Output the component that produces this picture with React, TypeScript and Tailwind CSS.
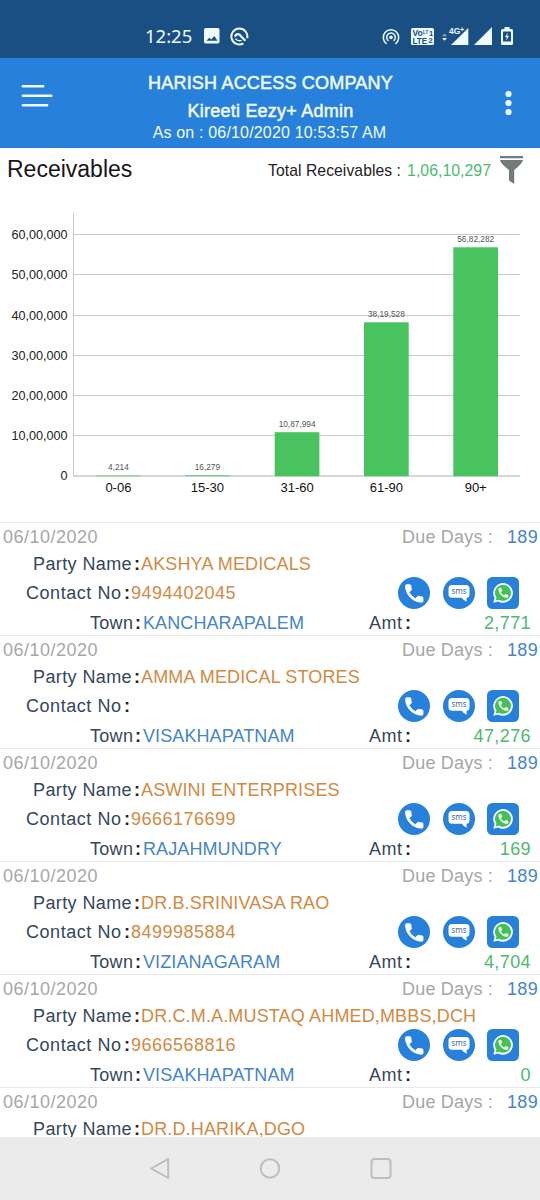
type Party = {
  name: string;
  contact: string;
  town: string;
  amount: string;
};

const parties: Party[] = [
  { name: "AKSHYA MEDICALS", contact: "9494402045", town: "KANCHARAPALEM", amount: "2,771" },
  { name: "AMMA MEDICAL STORES", contact: "", town: "VISAKHAPATNAM", amount: "47,276" },
  { name: "ASWINI ENTERPRISES", contact: "9666176699", town: "RAJAHMUNDRY", amount: "169" },
  { name: "DR.B.SRINIVASA RAO", contact: "8499985884", town: "VIZIANAGARAM", amount: "4,704" },
  { name: "DR.C.M.A.MUSTAQ AHMED,MBBS,DCH", contact: "9666568816", town: "VISAKHAPATNAM", amount: "0" }
];

const gridLines = [
  { y: 34.5, label: "60,00,000" },
  { y: 74.5, label: "50,00,000" },
  { y: 115.5, label: "40,00,000" },
  { y: 155.5, label: "30,00,000" },
  { y: 195.5, label: "20,00,000" },
  { y: 235.5, label: "10,00,000" },
  { y: 276, label: "0" }
];

const bars = [
  { x: 96, top: 275.6, range: "0-06", value: "4,214" },
  { x: 185, top: 275.4, range: "15-30", value: "16,279" },
  { x: 274.7, top: 232.2, range: "31-60", value: "10,87,994" },
  { x: 364, top: 122.3, range: "61-90", value: "38,19,528" },
  { x: 453.3, top: 47.3, range: "90+", value: "56,82,282" }
];

const handset =
  "M6.62 10.79a15.05 15.05 0 0 0 6.59 6.59l2.2-2.2a1 1 0 0 1 1.02-.24c1.12.37 2.33.57 3.57.57.55 0 1 .45 1 1V20c0 .55-.45 1-1 1C10.61 21 3 13.39 3 4c0-.55.45-1 1-1h3.5c.55 0 1 .45 1 1 0 1.25.2 2.45.57 3.57.11.35.03.74-.25 1.02z";

function StatusBar() {
  return (
    <div className="flex h-[58px] items-end bg-[#194f82] pr-[27px] pb-[11px] pl-[145px] text-[#eefaff]">
      <span className="w-[59px] font-['Noto_Sans',sans-serif] text-[18.5px] leading-[23px]">12:25</span>
      <svg className="mb-[3px]" width="16" height="16" viewBox="0 0 16 16">
        <rect width="15.5" height="15.5" rx="1.8" fill="currentColor" />
        <path d="M2.5 12.7 5.2 9.7 7.2 11.5 10.3 8 13.5 12.7Z" fill="#194f82" />
      </svg>
      <svg className="mb-[1px] ml-[10px]" width="19" height="19" viewBox="0 0 19 19" fill="none" stroke="currentColor">
        <path d="M13.4 16.4A8 8 0 1 1 17.2 11.2" strokeWidth="2" />
        <path d="M5 9.6C6.2 6.4 9.5 6.4 11 9.3L15.4 13.8" strokeWidth="2.2" />
        <path d="M5.2 11.6Q7.8 14.6 11.6 13.4" strokeWidth="1.4" />
      </svg>
      <svg className="mb-px ml-auto" width="18" height="18" viewBox="0 0 18 18" fill="none" stroke="currentColor" strokeWidth="1.5">
        <circle cx="9" cy="9.4" r="1.8" fill="currentColor" stroke="none" />
        <path d="M6.4 12.8A4.3 4.3 0 1 1 11.6 12.8M4.6 15.8A7.7 7.7 0 1 1 13.4 15.8" />
      </svg>
      <svg className="mb-[2px] ml-[11px]" width="23" height="17" viewBox="0 0 23 17">
        <rect width="23" height="17" rx="1.5" fill="currentColor" />
        <g fill="#194f82" className="font-['Liberation_Sans',sans-serif] font-bold">
          <text x="1.5" y="7.8" fontSize="8.5">Vo</text>
          <text x="12" y="5.5" fontSize="4.5">LT</text>
          <text x="18" y="7.6" fontSize="7.5">1</text>
          <text x="1.5" y="15.6" fontSize="8.5" textLength="14.5" lengthAdjust="spacingAndGlyphs">LTE</text>
          <text x="17.5" y="15.4" fontSize="7.5">2</text>
        </g>
      </svg>
      <svg className="mb-px ml-[8px]" width="27" height="20" viewBox="0 0 27 20" fill="currentColor">
        <path d="M0 10.2 2.5 7.5 5 10.2Z" opacity=".55" />
        <path d="M0 12 2.5 14.7 5 12Z" />
        <path d="M26.3 2V19H9Z" />
        <g stroke="#194f82" strokeWidth="1.2" paintOrder="stroke" className="font-['Liberation_Sans',sans-serif] font-bold">
          <text x="7" y="8" fontSize="8.5">4G</text>
          <text x="18" y="6" fontSize="7">+</text>
        </g>
      </svg>
      <svg className="mb-[2px] ml-[5px]" width="18" height="18" viewBox="0 0 18 18">
        <path d="M18 0V18H0Z" fill="currentColor" />
      </svg>
      <svg className="mb-[2px] ml-[9px]" width="12" height="18" viewBox="0 0 12 18">
        <path d="M3.5 0H8.5V2H10.5Q12 2 12 3.5V16.5Q12 18 10.5 18H1.5Q0 18 0 16.5V3.5Q0 2 1.5 2H3.5Z" fill="currentColor" />
        <rect x="2" y="4.6" width="8" height="10" rx=".6" fill="#194f82" />
        <path d="M6.8 5.8 4 10H5.7L5.2 13.4 8 9.1H6.3Z" fill="currentColor" />
      </svg>
    </div>
  );
}

function Header() {
  return (
    <header className="flex h-[90px] items-start bg-[#2781da] text-[#f1fbff]">
      <svg className="mt-[26px] ml-[21px]" width="32" height="24" viewBox="0 0 32 24" stroke="currentColor" strokeWidth="2.4" strokeLinecap="round">
        <path d="M1.8 2.2H22.3M1.8 11.7H30.3M1.8 21.2H26.2" />
      </svg>
      <div className="flex-1 pt-[11px] pl-px text-center whitespace-nowrap">
        <h1 className="text-lg leading-[28px] tracking-[0.2px] [-webkit-text-stroke:0.5px]">HARISH ACCESS COMPANY</h1>
        <h2 className="text-lg leading-[28px] tracking-[0.23px] [-webkit-text-stroke:0.5px]">Kireeti Eezy+ Admin</h2>
        <p className="-mt-px pr-[2px] text-base leading-[18px] tracking-[0.17px]">As on : 06/10/2020 10:53:57 AM</p>
      </div>
      <svg className="mt-[32px] mr-[28px] ml-[18px]" width="7" height="26" viewBox="0 0 7 26" fill="currentColor">
        <circle cx="3.5" cy="4" r="3.1" />
        <circle cx="3.5" cy="13" r="3.1" />
        <circle cx="3.5" cy="22" r="3.1" />
      </svg>
    </header>
  );
}

function Chart() {
  return (
    <svg className="block" width="540" height="322" viewBox="0 0 540 322">
      {gridLines.map((line) => (
        <g key={line.label}>
          <path d={`M73 ${line.y}H520`} stroke="#c9cbcb" strokeWidth={line.label === "0" ? 1.6 : 1} />
          <text x="67.5" y={line.y + 4} textAnchor="end" fontSize="12.6" fill="#222">
            {line.label}
          </text>
        </g>
      ))}
      <path d="M73.5 13V276" stroke="#c9cbcb" />
      {bars.map((bar) => (
        <g key={bar.range} textAnchor="middle">
          <rect x={bar.x} y={bar.top} width="44.7" height={276.2 - bar.top} fill="#49c360" />
          <text x={bar.x + 22.4} y={bar.top - 5.4} fontSize="8.3" fill="#555">
            {bar.value}
          </text>
          <text x={bar.x + 22.4} y="291.5" fontSize="13" fill="#111">
            {bar.range}
          </text>
        </g>
      ))}
    </svg>
  );
}

function ContactActions() {
  return (
    <div className="mr-[21px] flex items-center gap-[12.5px]">
      <svg width="32" height="32" viewBox="0 0 32 32">
        <circle cx="16" cy="16" r="16" fill="#2781da" />
        <path d={handset} fill="#fff" stroke="#fff" strokeWidth=".9" transform="translate(4.6 4.8) scale(.97)" />
      </svg>
      <svg width="32" height="32" viewBox="0 0 32 32">
        <circle cx="16" cy="16" r="16" fill="#2781da" />
        <path d="M9 8H23Q26.5 8 26.5 11.5V17.3Q26.5 20.8 23.6 20.8Q23.2 23 24.2 24.8Q20.5 24 18.8 20.8H9Q5.5 20.8 5.5 17.3V11.5Q5.5 8 9 8Z" fill="#fff" />
        <text x="16" y="17" textAnchor="middle" fontSize="8" fill="#426d9b" className="font-['Noto_Sans',sans-serif]">
          sms
        </text>
      </svg>
      <svg width="32" height="32" viewBox="0 0 32 32">
        <rect width="32" height="32" rx="5.5" fill="#2781da" />
        <path d="M6.3 25.8 7.6 20.9A9.8 9.8 0 1 1 11.3 24.5Z" fill="#fff" />
        <path d="M8.6 23.5 9.5 20.5A8 8 0 1 1 11.9 22.7Z" fill="#43c154" />
        <path d={handset} fill="#fff" stroke="#fff" strokeWidth=".8" transform="translate(10.1 9.7) scale(.52)" />
      </svg>
    </div>
  );
}

function PartyHeading({ name }: { name: string }) {
  return (
    <>
      <div className="flex h-7 items-center pr-[2px] pl-[3px] text-[#a5a7a9]">
        <span className="tracking-[0.5px]">06/10/2020</span>
        <span className="ml-auto tracking-[0.2px]">Due Days :</span>
        <span className="ml-[14px] tracking-[0.3px] text-[#4585c9]">189</span>
      </div>
      <div className="flex h-[26px] items-center pl-[33px]">
        <span className="w-[101px] tracking-[0.4px]">Party Name</span>
        <b className="w-[7px] text-[#222]">:</b>
        <span className="tracking-[0.15px] text-[#d18a43]">{name}</span>
      </div>
    </>
  );
}

function PartyRow({ party }: { party: Party }) {
  return (
    <li className="h-[113px] border-t border-[#e7e9eb]">
      <PartyHeading name={party.name} />
      <div className="flex h-[31px] items-center pl-[26px]">
        <span className="w-[98px] tracking-[0.55px]">Contact No</span>
        <b className="w-[7px] text-[#222]">:</b>
        <span className="tracking-[0.5px] text-[#d18a43]">{party.contact}</span>
        <div className="ml-auto">
          <ContactActions />
        </div>
      </div>
      <div className="flex h-[28px] items-center pt-px pr-[9px] pl-[90px]">
        <span className="w-[45px] tracking-[0.3px]">Town</span>
        <b className="w-[8px] text-[#222]">:</b>
        <span className="w-[226px] tracking-[0.1px] text-[#4585c9]">{party.town}</span>
        <span className="w-[36px] tracking-[0.5px]">Amt</span>
        <b className="text-[#222]">:</b>
        <span className="ml-auto tracking-[0.4px] text-[#4db970]">{party.amount}</span>
      </div>
    </li>
  );
}

function NavigationBar() {
  return (
    <nav className="flex h-[63px] shrink-0 justify-center bg-[#ebebeb]">
      <svg width="244" height="63" viewBox="-2 0 244 63" fill="none" stroke="#bdbdbd" strokeWidth="2" strokeLinejoin="round">
        <path d="M1.2 31.5 18.2 22V41Z" />
        <circle cx="120" cy="31.5" r="9.3" />
        <rect x="221.5" y="22" width="19" height="19" rx="3" />
      </svg>
    </nav>
  );
}

export default function App() {
  return (
    <div className="flex h-[1200px] w-[540px] flex-col overflow-hidden bg-white font-['Liberation_Sans',Arial,sans-serif]">
      <StatusBar />
      <Header />
      <main className="h-[989px] overflow-hidden">
        <div className="flex h-[52px] items-start justify-between pr-[17px] pl-[7px] whitespace-nowrap">
          <h3 className="pt-[5px] text-[23px] leading-[32px] text-[#161616]">Receivables</h3>
          <div className="flex">
            <span className="pt-[11px] text-[15.7px] leading-6 tracking-[0.07px] text-[#222]">Total Receivables :</span>
            <span className="ml-[6px] pt-[11px] text-[15.9px] leading-6 text-[#4db970]">1,06,10,297</span>
            <svg className="mt-[8px] ml-[9px]" width="23" height="28" viewBox="0 0 23 28" fill="#74797c">
              <path d="M0 0H23V2.2H0ZM0 4H23Q22.5 7.5 14.2 14V28L9 24.5V14Q.5 7.5 0 4Z" />
            </svg>
          </div>
        </div>
        <Chart />
        <ul className="text-lg whitespace-nowrap text-[#34475b]">
          {parties.map((party) => (
            <PartyRow key={party.name} party={party} />
          ))}
          <li className="border-t border-[#e7e9eb]">
            <PartyHeading name="DR.D.HARIKA,DGO" />
          </li>
        </ul>
      </main>
      <NavigationBar />
    </div>
  );
}
